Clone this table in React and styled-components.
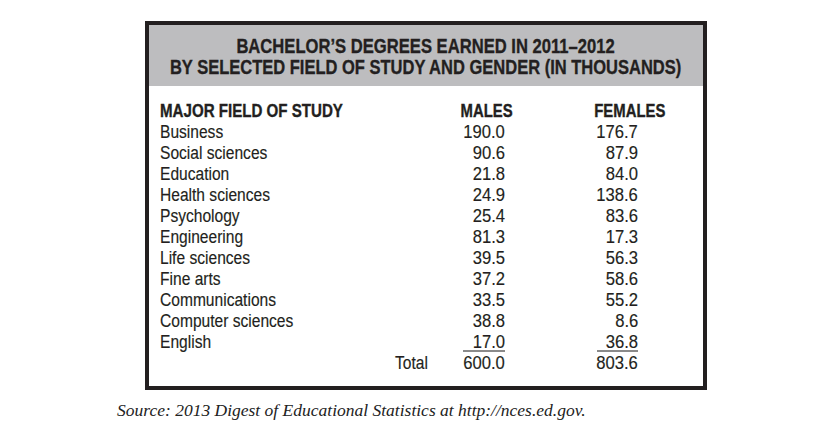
import React from "react";
import styled, { createGlobalStyle } from "styled-components";

const GlobalStyle = createGlobalStyle`
  body {
    margin: 0;
    background: #ffffff;
  }
`;

const Page = styled.div`
  width: 837px;
  height: 426px;
  padding-top: 21px;
  box-sizing: border-box;
  overflow: hidden;
`;

const Frame = styled.div`
  margin-left: 145px;
  width: 562px;
  box-sizing: border-box;
  border: 4px solid #231f20;
  color: #231f20;
  font-family: "Liberation Sans", Arial, sans-serif;
`;

const Banner = styled.div`
  background: #bdbdbf;
  padding: 10px 0 9px;
  display: flex;
  flex-direction: column;
  align-items: center;
  font-weight: 700;
  font-size: 20.5px;
  line-height: 21px;
  white-space: nowrap;
  -webkit-text-stroke: 0.35px #231f20;
`;

// the printed table is set in a condensed face; squeeze Liberation Sans to match
const Squeeze = styled.span`
  display: inline-block;
  white-space: nowrap;
  transform: scaleX(${(p) => p.$sx});
  transform-origin: ${(p) => p.$origin || "left"} center;
`;

const Body = styled.div`
  padding: 15px 0 12px 11px;
  font-size: 17.5px;
  line-height: 21px;
`;

const Row = styled.div`
  display: flex;
  font-weight: ${(p) => (p.$head ? 700 : 400)};
  -webkit-text-stroke: ${(p) => (p.$head ? "0.35px" : "0.15px")} #231f20;
`;

const Label = styled.div`
  width: 296px;
  text-align: ${(p) => (p.$right ? "right" : "left")};
  padding-right: ${(p) => (p.$right ? "28px" : "0")};
  box-sizing: border-box;
`;

const Cell = styled.div`
  width: 60px;
  margin-left: ${(p) => (p.$second ? "72px" : "0")};
  text-align: ${(p) => (p.$head ? "center" : "right")};
  padding-right: ${(p) => (p.$head ? "0" : p.$second ? "10px" : "11px")};
  box-sizing: border-box;
`;

const Underlined = styled.span`
  display: inline-block;
  width: ${(p) => p.$w}px;
  text-align: right;
  line-height: 16px;
  border-bottom: 2px solid #8a8a8a;
`;

const Source = styled.div`
  margin-top: 10px;
  padding-left: 117px;
  font-family: "Liberation Serif", "Times New Roman", serif;
  font-style: italic;
  font-size: 17.5px;
  line-height: 20px;
  color: #222222;
`;

const rows = [
  ["Business", "190.0", "176.7"],
  ["Social sciences", "90.6", "87.9"],
  ["Education", "21.8", "84.0"],
  ["Health sciences", "24.9", "138.6"],
  ["Psychology", "25.4", "83.6"],
  ["Engineering", "81.3", "17.3"],
  ["Life sciences", "39.5", "56.3"],
  ["Fine arts", "37.2", "58.6"],
  ["Communications", "33.5", "55.2"],
  ["Computer sciences", "38.8", "8.6"],
];

const LABEL_SX = 0.89;
const NUM_SX = 0.95;
const HEAD_SX = 0.85;

const Num = ({ children }) => (
  <Squeeze $sx={NUM_SX} $origin="right">
    {children}
  </Squeeze>
);

export default function App() {
  return (
    <>
      <GlobalStyle />
      <Page>
        <Frame>
          <Banner>
            <Squeeze $sx={0.81} $origin="center">
              BACHELOR’S DEGREES EARNED IN 2011–2012
            </Squeeze>
            <Squeeze $sx={0.805} $origin="center">
              BY SELECTED FIELD OF STUDY AND GENDER (IN THOUSANDS)
            </Squeeze>
          </Banner>
          <Body>
            <Row $head>
              <Label>
                <Squeeze $sx={0.863}>MAJOR FIELD OF STUDY</Squeeze>
              </Label>
              <Cell $head>
                <Squeeze $sx={HEAD_SX} $origin="center">MALES</Squeeze>
              </Cell>
              <Cell $head $second>
                <Squeeze $sx={HEAD_SX} $origin="center">FEMALES</Squeeze>
              </Cell>
            </Row>
            {rows.map(([field, m, f]) => (
              <Row key={field}>
                <Label>
                  <Squeeze $sx={LABEL_SX}>{field}</Squeeze>
                </Label>
                <Cell>
                  <Num>{m}</Num>
                </Cell>
                <Cell $second>
                  <Num>{f}</Num>
                </Cell>
              </Row>
            ))}
            <Row>
              <Label>
                <Squeeze $sx={LABEL_SX}>English</Squeeze>
              </Label>
              <Cell>
                <Underlined $w={42}>
                  <Num>17.0</Num>
                </Underlined>
              </Cell>
              <Cell $second>
                <Underlined $w={41}>
                  <Num>36.8</Num>
                </Underlined>
              </Cell>
            </Row>
            <Row>
              <Label $right>
                <Squeeze $sx={LABEL_SX} $origin="right">Total</Squeeze>
              </Label>
              <Cell>
                <Num>600.0</Num>
              </Cell>
              <Cell $second>
                <Num>803.6</Num>
              </Cell>
            </Row>
          </Body>
        </Frame>
        <Source>Source: 2013 Digest of Educational Statistics at http://nces.ed.gov.</Source>
      </Page>
    </>
  );
}
